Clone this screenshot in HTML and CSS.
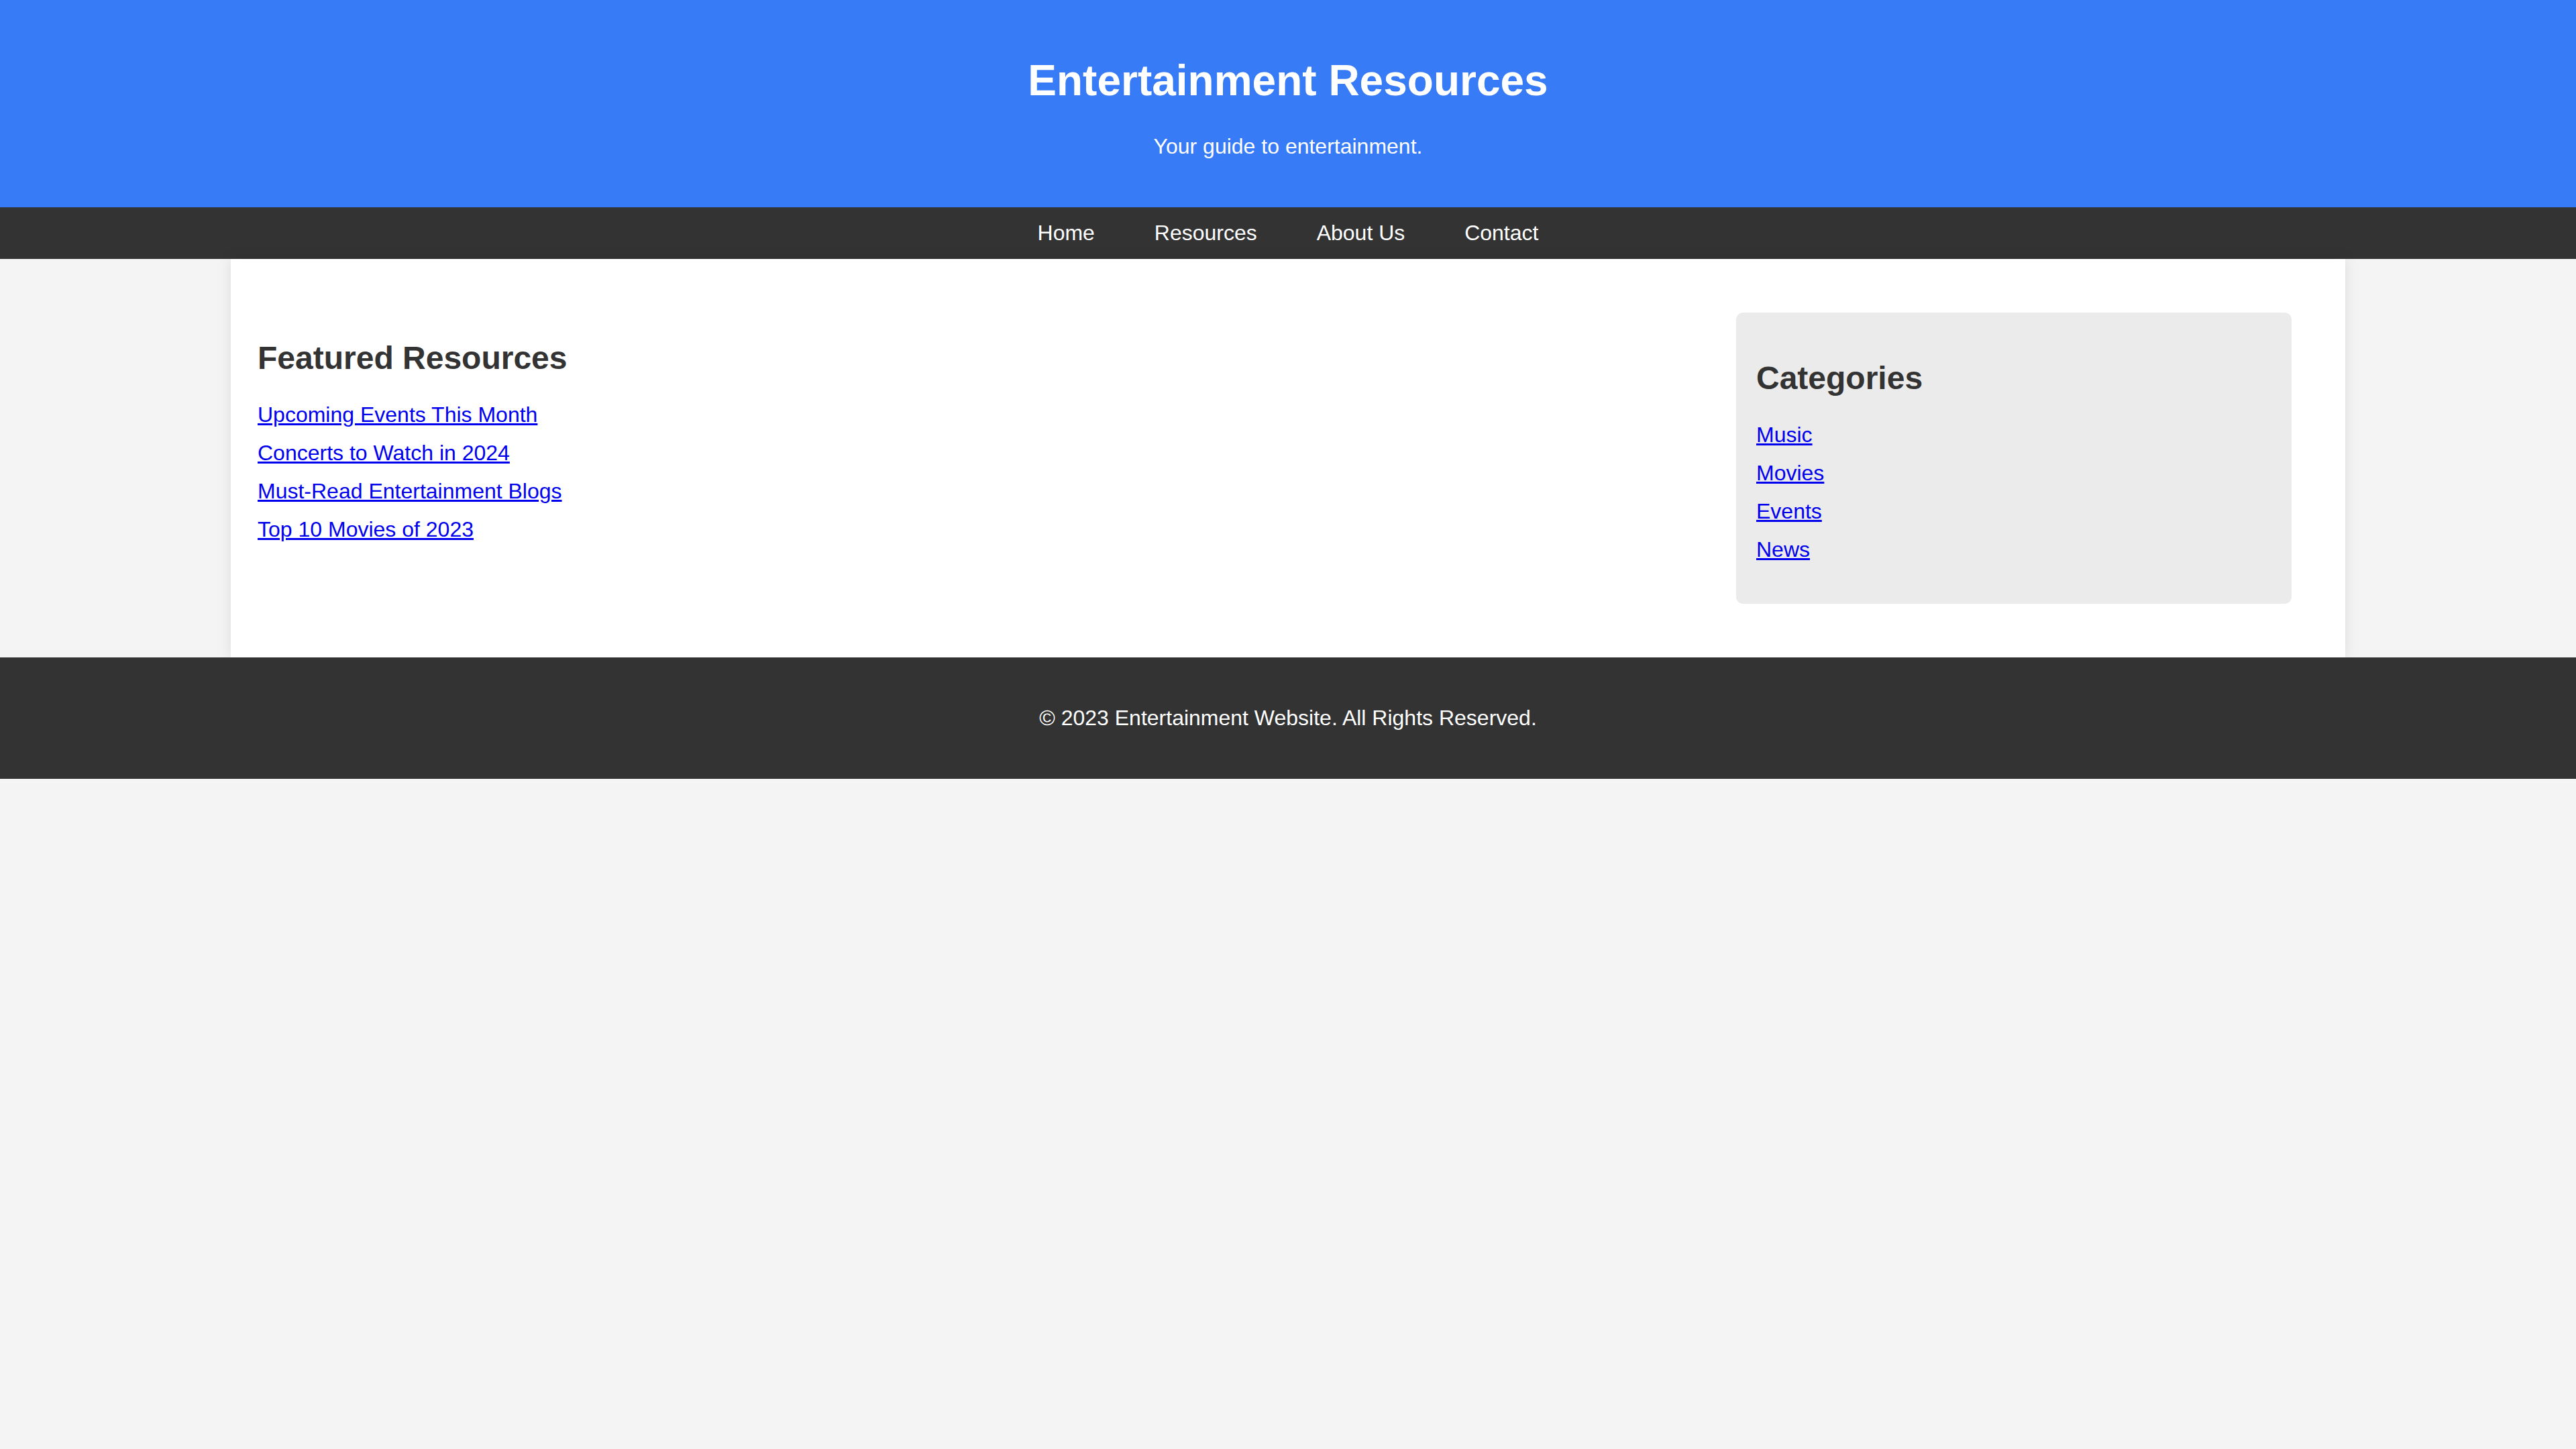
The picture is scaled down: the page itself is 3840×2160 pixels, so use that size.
FILE: index.html
```html
<!DOCTYPE html>
<html lang="en">
<head>
<meta charset="utf-8">
<title>Entertainment Resources</title>
<link rel="stylesheet" href="styles.css">
</head>
<body>
<header class="site-header">
  <h1 class="site-title">Entertainment Resources</h1>
  <p class="site-tagline">Your guide to entertainment.</p>
</header>
<nav class="site-nav">
  <a href="#" class="nav-link">Home</a>
  <a href="#" class="nav-link">Resources</a>
  <a href="#" class="nav-link">About Us</a>
  <a href="#" class="nav-link">Contact</a>
</nav>
<div class="container">
  <section class="featured">
    <h2 class="section-title">Featured Resources</h2>
    <ul class="link-list">
      <li class="link-item"><a href="#">Upcoming Events This Month</a></li>
      <li class="link-item"><a href="#">Concerts to Watch in 2024</a></li>
      <li class="link-item"><a href="#">Must-Read Entertainment Blogs</a></li>
      <li class="link-item"><a href="#">Top 10 Movies of 2023</a></li>
    </ul>
  </section>
  <aside class="sidebar">
    <h2 class="section-title">Categories</h2>
    <ul class="link-list">
      <li class="link-item"><a href="#">Music</a></li>
      <li class="link-item"><a href="#">Movies</a></li>
      <li class="link-item"><a href="#">Events</a></li>
      <li class="link-item"><a href="#">News</a></li>
    </ul>
  </aside>
</div>
<footer class="site-footer">
  <p class="footer-text">&copy; 2023 Entertainment Website. All Rights Reserved.</p>
</footer>
</body>
</html>
```
FILE: styles.css
```css
html, body {
  margin: 0;
  padding: 0;
}

body {
  font-family: "Liberation Sans", Arial, Helvetica, sans-serif;
  font-size: 32px;
  background: #f4f4f4;
  color: #333333;
}

.site-header {
  background: #377bf6;
  color: #ffffff;
  text-align: center;
  padding: 40px;
}

.site-title {
  font-size: 64px;
  font-weight: bold;
  margin: 42.88px 0;
}

.site-tagline {
  margin: 32px 0;
}

.site-nav {
  background: #333333;
  text-align: center;
  padding: 20px 0;
}

.nav-link {
  color: #ffffff;
  text-decoration: none;
  margin: 0 40px;
}

.container {
  width: 3072px;
  margin: 0 auto;
  padding: 40px;
  background: #ffffff;
  box-shadow: 0 0 20px rgba(0, 0, 0, 0.1);
  display: flex;
  align-items: flex-start;
}

.featured {
  flex: 1;
  margin: 40px 0;
}

.sidebar {
  width: 768px;
  flex: none;
  padding: 30px;
  margin: 40px;
  background: #ebebeb;
  border-radius: 10px;
}

.section-title {
  font-size: 48px;
  font-weight: bold;
  margin: 39.84px 0;
}

.link-list {
  list-style: none;
  padding: 0;
  margin: 32px 0;
}

.link-item {
  margin-bottom: 20px;
}

.link-item a {
  color: #0000ee;
  text-decoration: underline;
}

.site-footer {
  background: #333333;
  color: #ffffff;
  text-align: center;
  padding: 40px;
}

.footer-text {
  margin: 32px 0;
}
```
